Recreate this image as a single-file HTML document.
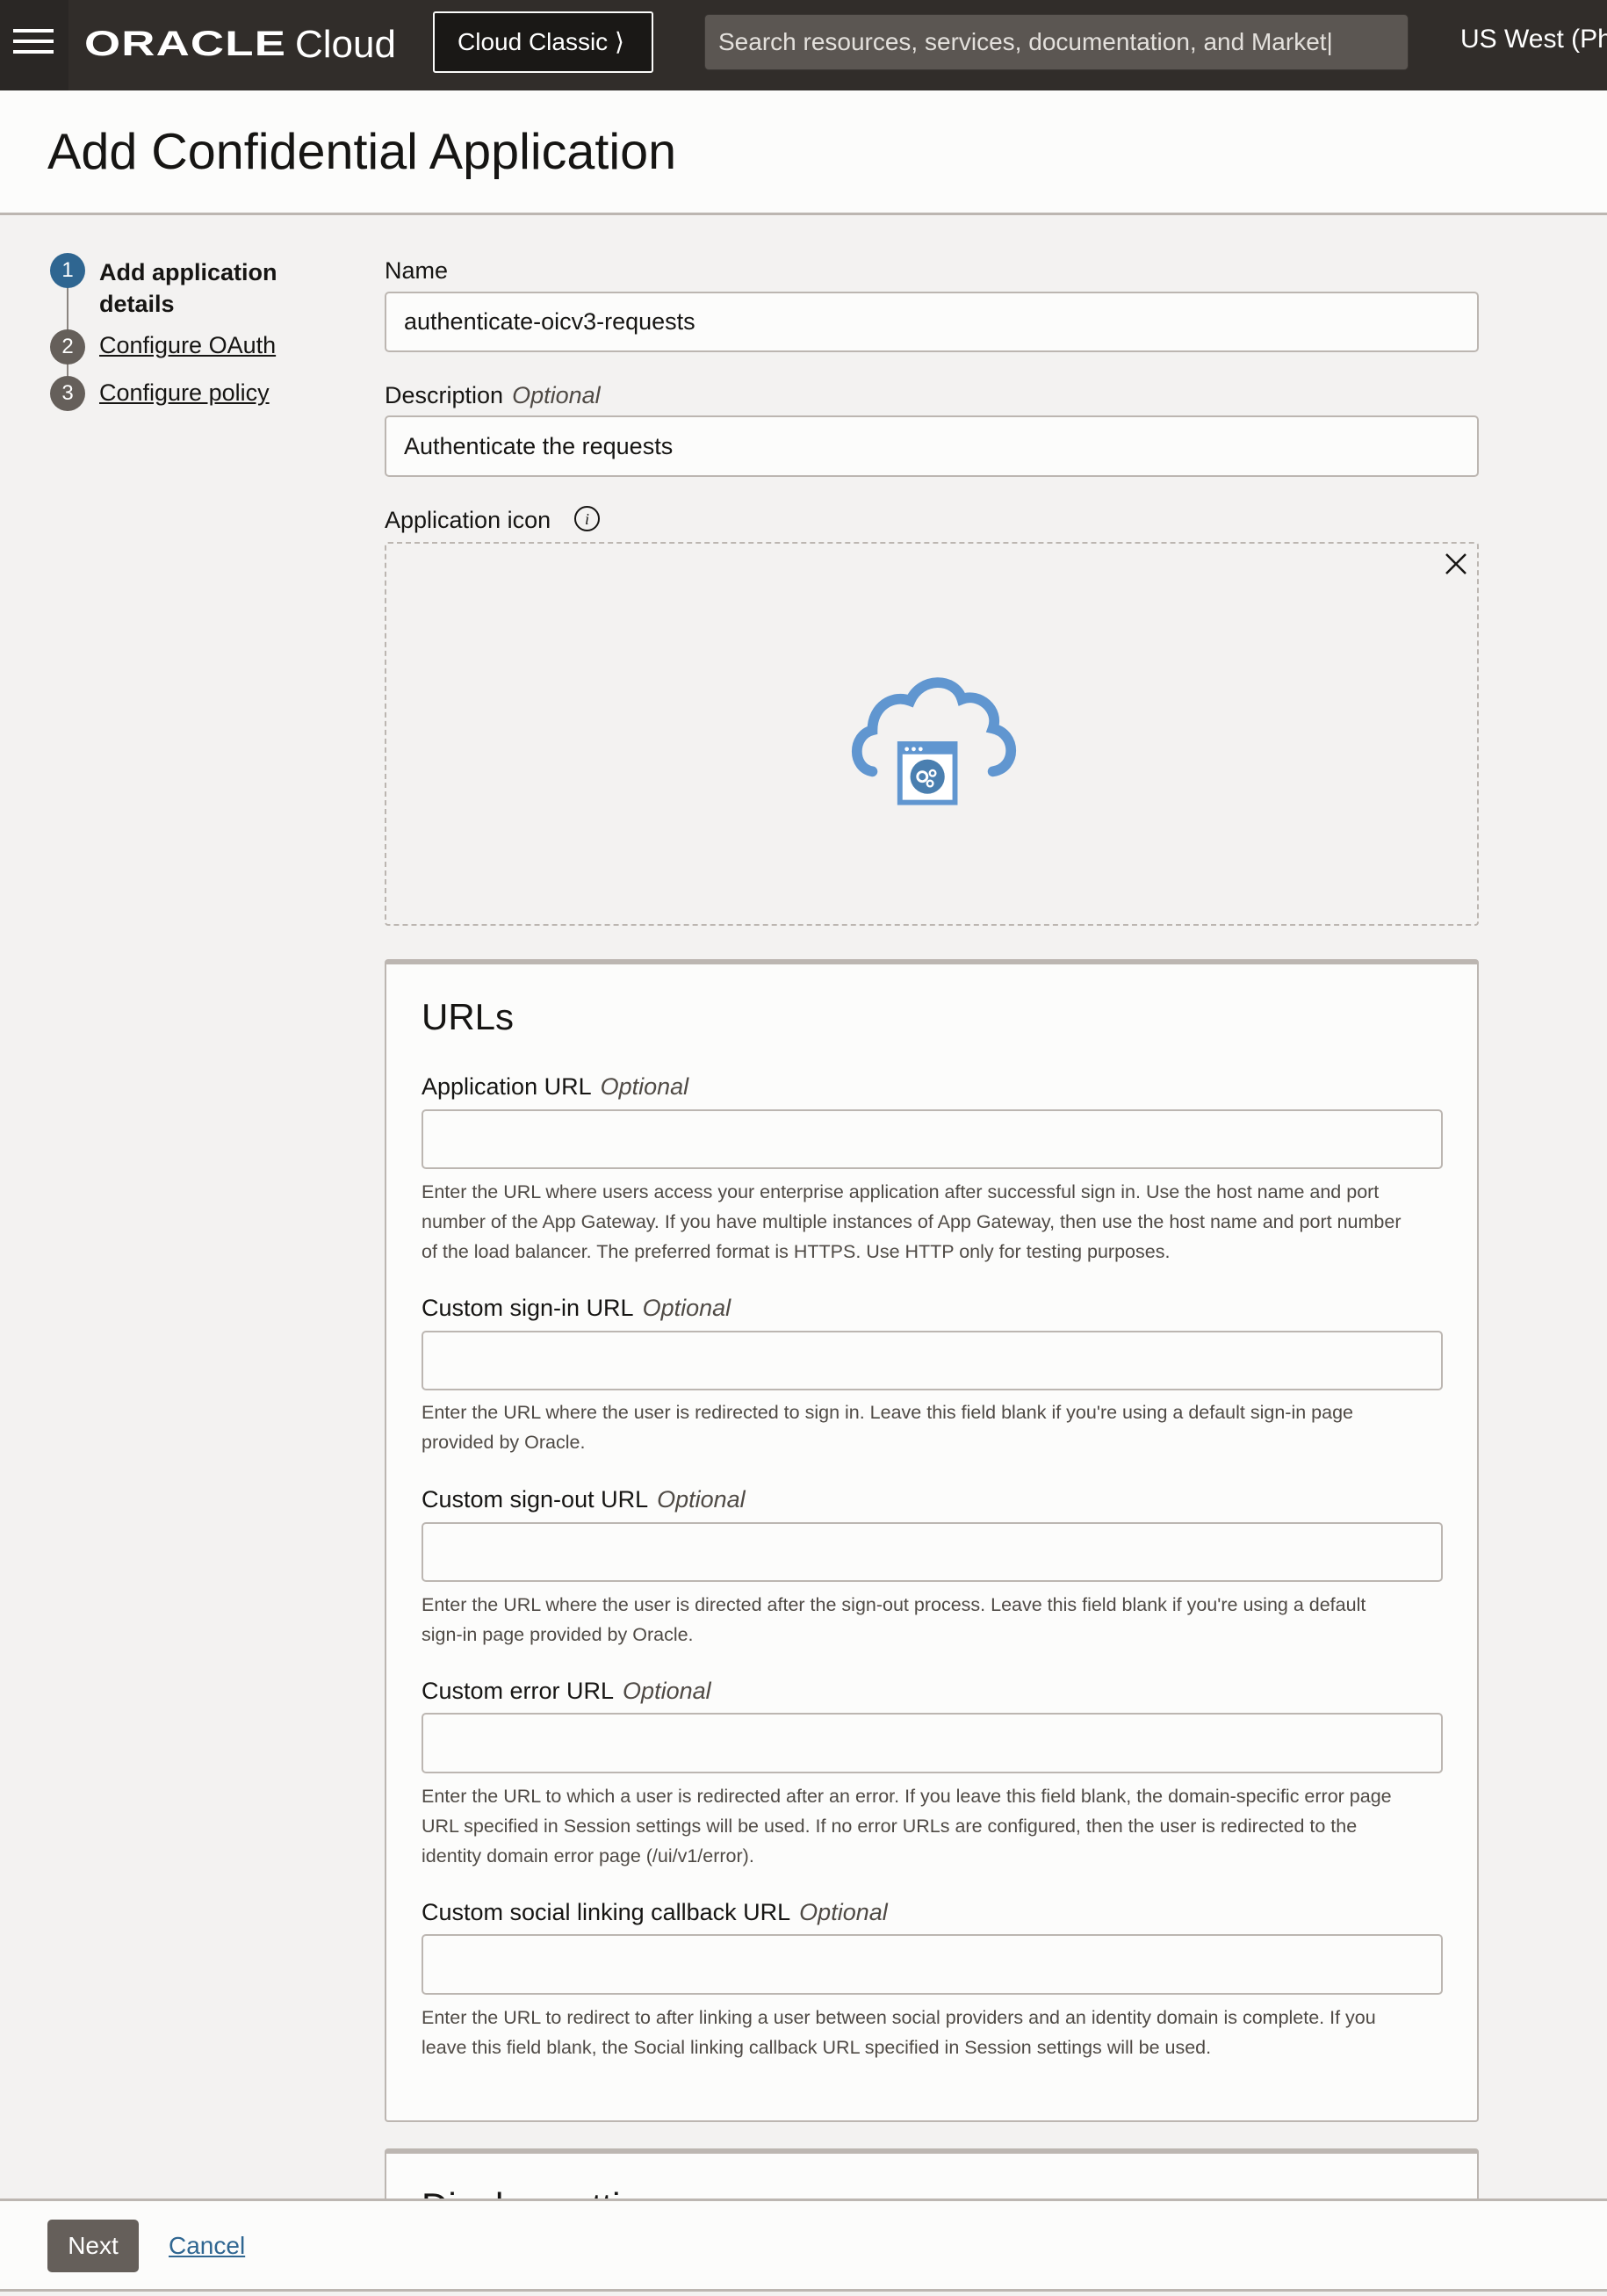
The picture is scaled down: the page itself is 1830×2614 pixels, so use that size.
<!DOCTYPE html>
<html><head><meta charset="utf-8"><style>
*{box-sizing:border-box;margin:0;padding:0}
body{width:1830px;height:2614px;position:relative;overflow:hidden;background:#f3f2f1;font-family:"Liberation Sans",sans-serif;color:#161513}
.a{position:absolute;white-space:nowrap}
.hdr{left:0;top:0;width:1830px;height:103px;background:#312d2a}
.lbl{font-size:27px;color:#161513}
.opt{font-style:italic;color:#4f4a45;margin-left:10px}
.inp{background:#fcfcfb;border:2px solid #bcb6b1;border-radius:5px}
.help{font-size:21.5px;line-height:34px;color:#4f4a45}
.step{font-size:27px;color:#161513}
.circ{width:40px;height:40px;border-radius:50%;color:#fff;font-size:24px;text-align:center;line-height:40px}
.u{color:#161513;text-decoration:underline}
</style></head><body>
<div class="a hdr"></div>
<div class="a" style="left:0;top:0;width:78px;height:103px;background:#2a2725"></div>
<div class="a" style="left:15px;top:33px;width:46px;height:4px;background:#fff"></div>
<div class="a" style="left:15px;top:45px;width:46px;height:4px;background:#fff"></div>
<div class="a" style="left:15px;top:57px;width:46px;height:4px;background:#fff"></div>
<div class="a" style="left:96px;top:28px;font-size:44px;color:#fff;font-weight:bold;letter-spacing:1px;transform:scale(1.2,0.9);transform-origin:top left">ORACLE</div>
<div class="a" style="left:336px;top:26px;font-size:44px;color:#fff">Cloud</div>
<div class="a" style="left:493px;top:13px;width:251px;height:70px;background:#1a1816;border:2px solid #fcfcfb;border-radius:3px;color:#fff;font-size:28px;line-height:66px;padding-left:26px">Cloud Classic &#x27E9;</div>
<div class="a" style="left:802px;top:16px;width:802px;height:64px;background:#5b5652;border-radius:5px;border:1px solid #3a3633;color:#e3e0dc;font-size:28px;line-height:62px;padding-left:15px;overflow:hidden">Search resources, services, documentation, and Market|</div>
<div class="a" style="left:1663px;top:28px;font-size:30px;color:#fff">US West (Ph</div>

<div class="a" style="left:0;top:103px;width:1830px;height:142px;background:#fcfcfb;border-bottom:3px solid #bcb6b1"></div>
<div class="a" style="left:54px;top:140px;font-size:57.5px;color:#161513">Add Confidential Application</div>

<!-- stepper -->
<div class="a" style="left:76px;top:308px;width:2px;height:140px;background:#8b8580"></div>
<div class="a circ" style="left:57px;top:288px;background:#2f6691">1</div>
<div class="a circ" style="left:57px;top:375px;background:#655f5a">2</div>
<div class="a circ" style="left:57px;top:428px;background:#655f5a">3</div>
<div class="a step" style="left:113px;top:292px;font-weight:bold;line-height:36px">Add application<br>details</div>
<div class="a step u" style="left:113px;top:378px">Configure OAuth</div>
<div class="a step u" style="left:113px;top:432px">Configure policy</div>

<div class="a lbl" style="left:438px;top:293px">Name</div>
<div class="a inp" style="left:438px;top:332px;width:1246px;height:69px"></div>
<div class="a" style="left:460px;top:351px;font-size:27px">authenticate-oicv3-requests</div>
<div class="a lbl" style="left:438px;top:435px">Description<span class="opt">Optional</span></div>
<div class="a inp" style="left:438px;top:473px;width:1246px;height:70px"></div>
<div class="a" style="left:460px;top:493px;font-size:27px">Authenticate the requests</div>
<div class="a lbl" style="left:438px;top:577px">Application icon</div>
<div class="a" style="left:654px;top:576px;width:29px;height:29px;border:2px solid #161513;border-radius:50%;font-size:18px;font-style:italic;font-family:'Liberation Serif',serif;text-align:center;line-height:26px">i</div>
<div class="a" style="left:438px;top:617px;width:1246px;height:437px;border:2px dashed #bcb6b1;border-radius:4px"></div>
<svg class="a" style="left:1644px;top:628px" width="28" height="28" viewBox="0 0 28 28"><path d="M3 3L25 25M25 3L3 25" stroke="#161513" stroke-width="2.5"/></svg>
<svg class="a" style="left:966px;top:760px" width="196" height="170" viewBox="0 0 100 86">
<path d="M14 60 C2 58 2 39 14 36 C14 22 26 15 36 19 C42 5 62 5 66 18 C76 14 88 24 84 35 C98 38 98 58 84 60" fill="none" stroke="#6096d0" stroke-width="6" stroke-linecap="round"/>
<rect x="30" y="44" width="32" height="34" fill="#fff" stroke="#6096d0" stroke-width="3"/>
<rect x="30" y="44" width="32" height="6" fill="#6096d0"/>
<circle cx="34" cy="47" r="1.2" fill="#fff"/><circle cx="38" cy="47" r="1.2" fill="#fff"/><circle cx="42" cy="47" r="1.2" fill="#fff"/>
<circle cx="46" cy="63" r="10" fill="#4a7fb0"/>
<circle cx="43" cy="63" r="2.8" fill="none" stroke="#fff" stroke-width="1.5"/>
<circle cx="49" cy="61" r="1.7" fill="none" stroke="#fff" stroke-width="1.2"/>
<circle cx="47.5" cy="67" r="1.7" fill="none" stroke="#fff" stroke-width="1.2"/>
</svg>

<!-- URLs card -->
<div class="a" style="left:438px;top:1092px;width:1246px;height:1324px;background:#fcfcfb;border:2px solid #bcb6b1;border-top:6px solid #bcb6b1;border-radius:4px"></div>
<div class="a" style="left:480px;top:1134px;font-size:42px">URLs</div>

<div class="a lbl" style="left:480px;top:1222px">Application URL<span class="opt">Optional</span></div>
<div class="a inp" style="left:480px;top:1263px;width:1163px;height:68px"></div>
<div class="a help" style="left:480px;top:1340px">Enter the URL where users access your enterprise application after successful sign in. Use the host name and port<br>number of the App Gateway. If you have multiple instances of App Gateway, then use the host name and port number<br>of the load balancer. The preferred format is HTTPS. Use HTTP only for testing purposes.</div>

<div class="a lbl" style="left:480px;top:1474px">Custom sign-in URL<span class="opt">Optional</span></div>
<div class="a inp" style="left:480px;top:1515px;width:1163px;height:68px"></div>
<div class="a help" style="left:480px;top:1591px">Enter the URL where the user is redirected to sign in. Leave this field blank if you're using a default sign-in page<br>provided by Oracle.</div>

<div class="a lbl" style="left:480px;top:1692px">Custom sign-out URL<span class="opt">Optional</span></div>
<div class="a inp" style="left:480px;top:1733px;width:1163px;height:68px"></div>
<div class="a help" style="left:480px;top:1810px">Enter the URL where the user is directed after the sign-out process. Leave this field blank if you're using a default<br>sign-in page provided by Oracle.</div>

<div class="a lbl" style="left:480px;top:1910px">Custom error URL<span class="opt">Optional</span></div>
<div class="a inp" style="left:480px;top:1950px;width:1163px;height:69px"></div>
<div class="a help" style="left:480px;top:2028px">Enter the URL to which a user is redirected after an error. If you leave this field blank, the domain-specific error page<br>URL specified in Session settings will be used. If no error URLs are configured, then the user is redirected to the<br>identity domain error page (/ui/v1/error).</div>

<div class="a lbl" style="left:480px;top:2162px">Custom social linking callback URL<span class="opt">Optional</span></div>
<div class="a inp" style="left:480px;top:2202px;width:1163px;height:69px"></div>
<div class="a help" style="left:480px;top:2280px">Enter the URL to redirect to after linking a user between social providers and an identity domain is complete. If you<br>leave this field blank, the Social linking callback URL specified in Session settings will be used.</div>

<div class="a" style="left:438px;top:2446px;width:1246px;height:100px;background:#fcfcfb;border:2px solid #bcb6b1;border-top:6px solid #bcb6b1;border-radius:4px"></div>
<div class="a" style="left:480px;top:2488px;font-size:42px">Display settings</div>

<!-- footer -->
<div class="a" style="left:0;top:2503px;width:1830px;height:106px;background:#fcfcfb;border-top:3px solid #bcb6b1;border-bottom:3px solid #bcb6b1"></div>
<div class="a" style="left:54px;top:2527px;width:104px;height:60px;background:#655f5a;border-radius:5px;color:#fff;font-size:28px;text-align:center;line-height:60px">Next</div>
<div class="a" style="left:192px;top:2541px;font-size:28px;color:#2f6691;text-decoration:underline">Cancel</div>
</body></html>
